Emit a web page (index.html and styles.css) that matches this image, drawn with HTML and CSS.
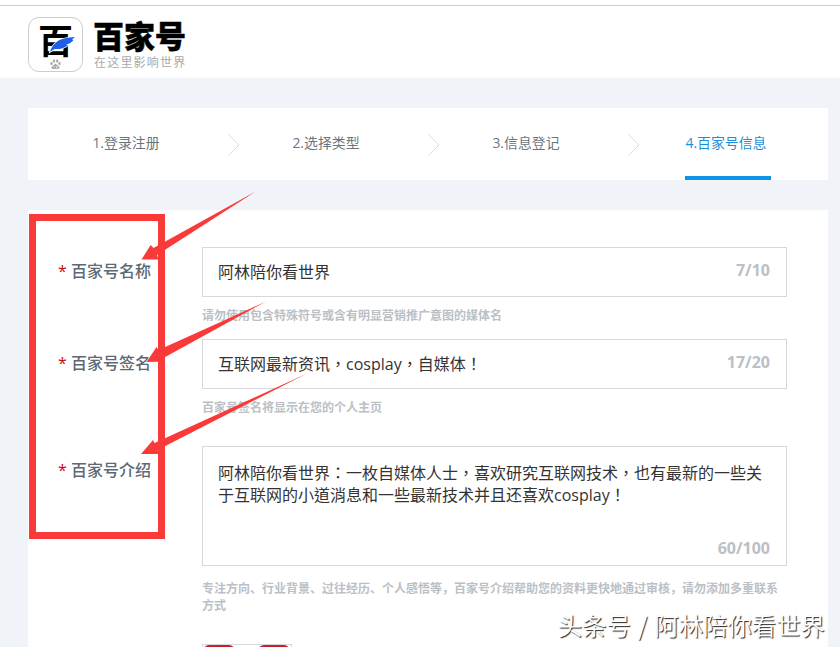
FILE: index.html
```html
<!DOCTYPE html>
<html lang="zh-CN">
<head>
    <meta charset="UTF-8">
    <meta name="viewport" content="width=device-width, initial-scale=1.0">
    <title>百家号</title>
    <link rel="stylesheet" href="styles.css">
</head>
<body>
    <header class="header">
        <div class="logo-icon">
            <span class="logo-char">百</span>
            <svg class="logo-feather" width="55" height="55" viewBox="0 0 55 55">
                <path d="M22 35 C23 31 25 28 28 25.5 C32 21.5 39 20.5 47 20 L44 22.5 L45.5 23 C43.5 25.5 41 27 38 27.7 L40 28.2 C36 31.5 31 32.5 26.5 32 Z" fill="#1f5fe8" stroke="#fff" stroke-width="1.6" paint-order="stroke"/>
                <!-- paw -->
                <g fill="#aaa">
                    <ellipse cx="23.5" cy="46.5" rx="1.2" ry="1.7"/>
                    <ellipse cx="26" cy="44" rx="1.2" ry="1.7"/>
                    <ellipse cx="29.2" cy="44" rx="1.2" ry="1.7"/>
                    <ellipse cx="31.5" cy="46.5" rx="1.2" ry="1.7"/>
                    <path d="M27.5 46.5 L31.5 50 Q32 52.5 29.5 52 L25.5 52 Q23 52.5 23.5 50 Z"/>
                </g>
                <path d="M25.5 50h1.5M28.5 49v1.8h1.5" stroke="#fff" stroke-width=".6" fill="none"/>
            </svg>
        </div>
        <div class="logo-text">
            <h1>百家号</h1>
            <p>在这里影响世界</p>
        </div>
    </header>

    <ul class="steps">
        <li>
            <span>1.登录注册</span>
            <svg width="12" height="24" viewBox="0 0 12 24"><path d="M.5 1.5 L11 12 L.5 22.5"/></svg>
        </li>
        <li>
            <span>2.选择类型</span>
            <svg width="12" height="24" viewBox="0 0 12 24"><path d="M.5 1.5 L11 12 L.5 22.5"/></svg>
        </li>
        <li>
            <span>3.信息登记</span>
            <svg width="12" height="24" viewBox="0 0 12 24"><path d="M.5 1.5 L11 12 L.5 22.5"/></svg>
        </li>
        <li class="active"><span>4.百家号信息</span></li>
    </ul>

    <main class="panel">
        <div class="row">
            <div class="label"><em>*</em>百家号名称</div>
            <div class="control">
                <div class="field">
                    <div class="value">阿林陪你看世界</div>
                    <div class="count">7/10</div>
                </div>
                <p class="tip">请勿使用包含特殊符号或含有明显营销推广意图的媒体名</p>
            </div>
        </div>
        <div class="row row-sign">
            <div class="label"><em>*</em>百家号签名</div>
            <div class="control">
                <div class="field">
                    <div class="value">互联网最新资讯，cosplay，自媒体！</div>
                    <div class="count">17/20</div>
                </div>
                <p class="tip">百家号签名将显示在您的个人主页</p>
            </div>
        </div>
        <div class="row row-intro">
            <div class="label"><em>*</em>百家号介绍</div>
            <div class="control">
                <div class="field area">
                    <div class="value">阿林陪你看世界：一枚自媒体人士，喜欢研究互联网技术，也有最新的一些关于互联网的小道消息和一些最新技术并且还喜欢cosplay！</div>
                    <div class="count">60/100</div>
                </div>
                <p class="tip">专注方向、行业背景、过往经历、个人感悟等，百家号介绍帮助您的资料更快地通过审核，请勿添加多重联系方式</p>
                <div class="avatar">
                    <svg width="88" height="88" viewBox="0 0 88 88">
                        <rect x="0" y="0" width="32" height="40" rx="6" fill="#c91f28"/>
                        <rect x="55" y="0" width="32" height="40" rx="6" fill="#c91f28"/>
                    </svg>
                </div>
            </div>
        </div>
    </main>

    <!-- red marks over the form -->
    <svg class="marks" width="840" height="647" viewBox="0 0 840 647">
        <rect x="32.5" y="217.5" width="129" height="318" fill="none" stroke="#fa3939" stroke-width="7"/>
        <g fill="#fa3939">
            <path d="M256.5 191 L153.5 248 L150.7 245 L141.5 259.5 L158.5 259.5 L157 255 Z"/>
            <path d="M266 301.5 L158.5 350 L156.5 347 L146.5 362 L164 361.5 L162.5 358.5 Z"/>
            <path d="M307 373.5 L154.5 443 L153 440 L141 454 L159 454 L157.5 450 Z"/>
        </g>
    </svg>
    <div class="watermark">头条号 / 阿林陪你看世界</div>
</body>
</html>
```

FILE: styles.css
```css
* {
    box-sizing: border-box;
}
body {
    margin: 0;
    height: 647px;
    overflow: hidden;
    position: relative;
    background: #f0f3f8;
    font-family: "Open Sans", "Noto Sans CJK SC", sans-serif;
    color: #333;
}
h1, p, ul {
    margin: 0;
    padding: 0;
}
em {
    font-style: normal;
}

/* Header */
.header {
    height: 78px;
    padding: 11px 28px 0;
    display: flex;
    background: linear-gradient(#ccc, #ccc) 0 5px / 100% 1px no-repeat #fff;
}
.logo-icon {
    position: relative;
    width: 55px;
    height: 55px;
    margin-top: 6px;
    border: 1px solid #ccc;
    border-radius: 11px;
    text-align: center;
}
.logo-char {
    display: block;
    height: 42px;
    font: 700 35px/41px "Noto Sans CJK SC", sans-serif;
    color: #000;
}
.logo-feather {
    position: absolute;
    top: -1px;
    left: -1px;
}
.logo-text {
    margin-left: 10px;
    white-space: nowrap;
}
.logo-text h1 {
    font: 900 31px/48px "Noto Sans CJK SC", sans-serif;
    height: 43px;
    color: #000;
    -webkit-text-stroke: 0.5px #000;
}
.logo-text p {
    padding-left: 1px;
    font-size: 12px;
    line-height: 18px;
    letter-spacing: 1.2px;
    color: #aaa;
}

/* Steps */
.steps {
    display: flex;
    width: 800px;
    height: 72px;
    margin: 30px 0 30px 28px;
    background: #fff;
    list-style: none;
}
.steps li {
    display: flex;
    width: 200px;
    justify-content: center;
    position: relative;
    font-size: 13.9px;
    line-height: 70px;
    color: #6b7580;
}
.steps span {
    height: 72px;
    padding-right: 4px;
}
.steps svg {
    position: absolute;
    left: 200px;
    top: 25px;
    fill: none;
    stroke: #dcdfe2;
}
.steps .active {
    color: #1a90dc;
}
.steps .active span {
    border-bottom: 4px solid #0f93e9;
}

/* Form */
.panel {
    width: 800px;
    height: 437px;
    margin-left: 28px;
    padding-top: 37px;
    background: #fff;
    overflow: hidden;
}
.row {
    display: flex;
}
.row-sign {
    margin-top: 15px;
}
.row-intro {
    margin-top: 30px;
}
.label {
    width: 174px;
    padding-left: 30px;
    font-size: 16px;
    font-weight: 500;
    line-height: 48px;
    color: #5c6873;
}
.label em {
    display: inline-block;
    width: 13px;
    color: #d0021b;
}
.control {
    width: 585px;
}
.field {
    display: flex;
    justify-content: space-between;
    height: 50px;
    padding: 0 16px 0 15px;
    border: 1px solid #d5d9dd;
}
/* locl off keeps the full-width punctuation centred */
.value {
    font-family: "Open Sans", "Noto Sans CJK TC", sans-serif;
    font-feature-settings: "locl" 0;
    font-size: 16px;
    font-weight: 390;
    line-height: 48px;
    white-space: nowrap;
}
.count {
    font-size: 16px;
    font-weight: 700;
    line-height: 44px;
    color: #bbbfc6;
}
.area {
    flex-direction: column;
    height: 120px;
    padding-top: 15px;
}
.area .value {
    width: 546px;
    line-height: 22px;
    white-space: normal;
}
.area .count {
    align-self: flex-end;
    line-height: 34px;
}
.tip {
    margin-top: 10px;
    font-size: 12px;
    font-weight: 700;
    line-height: 17px;
    color: #bbbfc6;
}
.row-intro .tip {
    margin-top: 14px;
}
.avatar {
    width: 90px;
    height: 90px;
    margin-top: 30px;
    border: 1px solid #d5d9dd;
}

.marks {
    position: absolute;
    top: 0;
    left: 0;
}
.watermark {
    position: absolute;
    right: 15px;
    top: 607px;
    font: 350 24.4px/36px "Noto Sans CJK SC", sans-serif;
    word-spacing: 1.5px;
    white-space: nowrap;
    color: #fff;
    text-shadow: 1px 1px 1px #222;
}
```
